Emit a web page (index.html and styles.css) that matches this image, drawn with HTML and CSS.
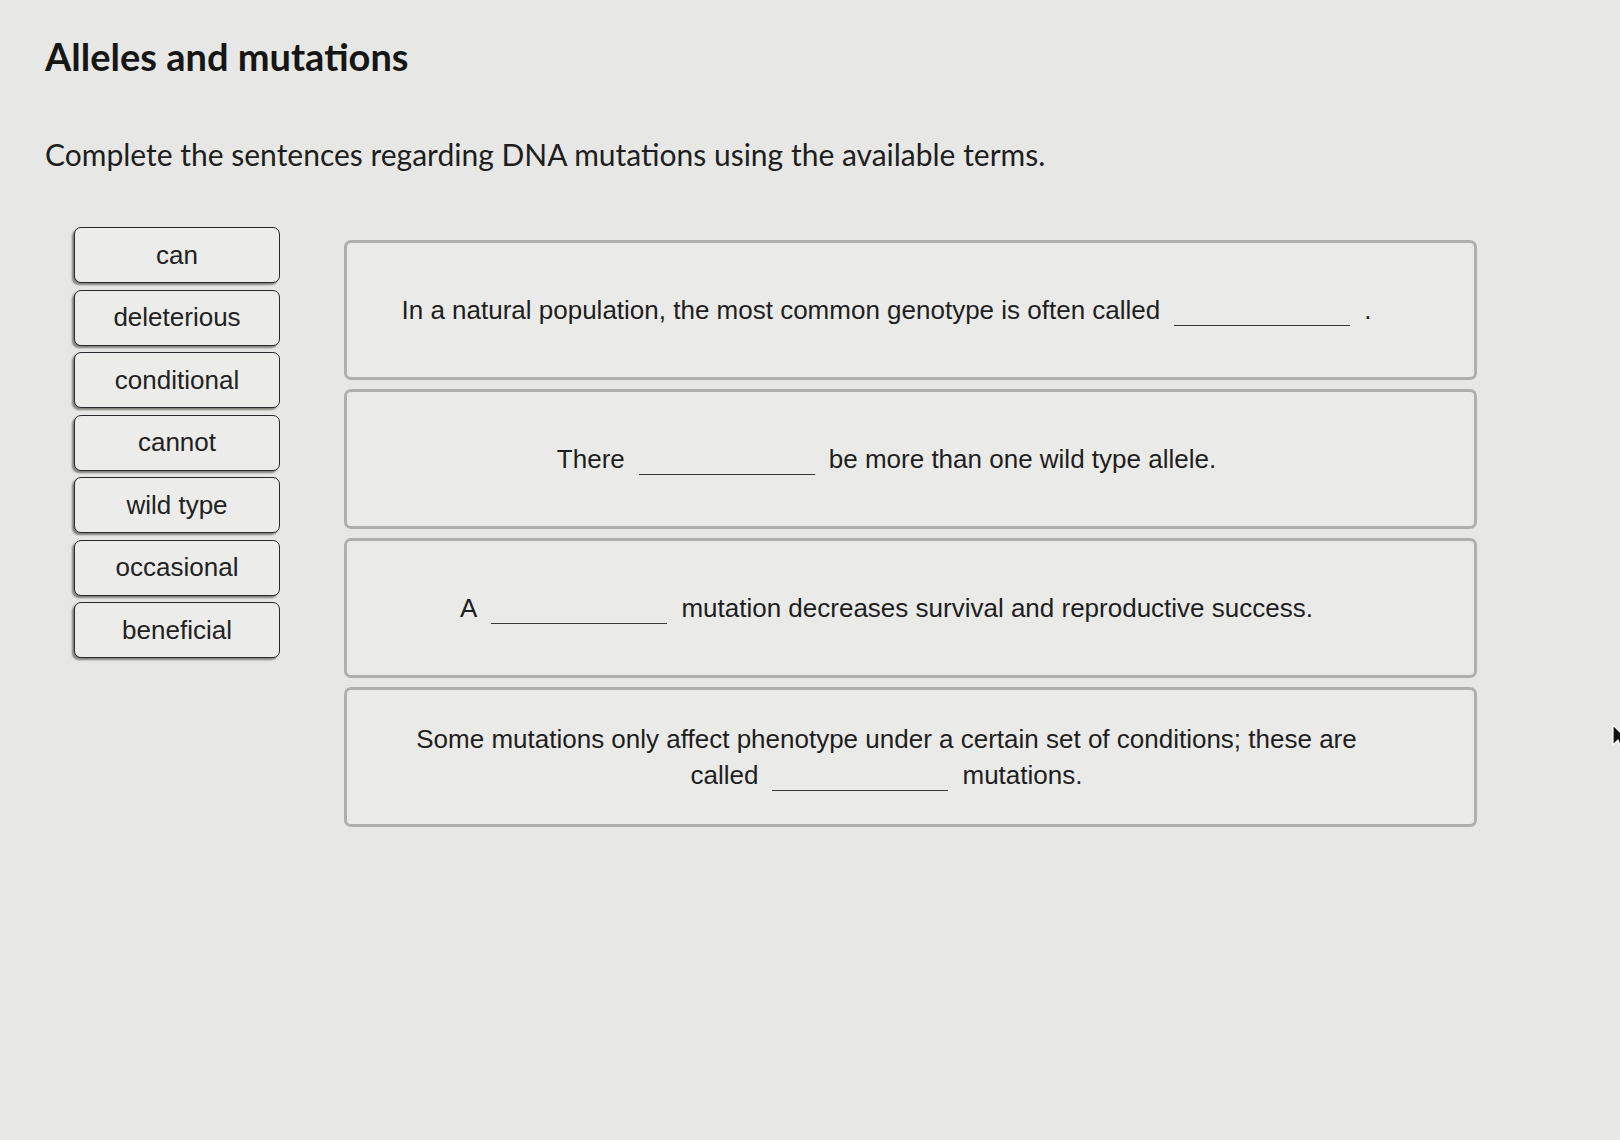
FILE: index.html
```html
<!DOCTYPE html>
<html lang="en">
<head>
<meta charset="utf-8">
<title>Alleles and mutations</title>
<link rel="stylesheet" href="styles.css">
</head>
<body>
<main class="page">
  <h1 class="title">Alleles and mutations</h1>
  <p class="prompt">Complete the sentences regarding DNA mutations using the available terms.</p>

  <section class="activity">
    <ul class="terms">
      <li class="term">can</li>
      <li class="term">deleterious</li>
      <li class="term">conditional</li>
      <li class="term">cannot</li>
      <li class="term">wild type</li>
      <li class="term">occasional</li>
      <li class="term">beneficial</li>
    </ul>

    <div class="sentences">
      <div class="sentence">
        <p class="line">In a natural population, the most common genotype is often called<span class="blank"></span>.</p>
      </div>
      <div class="sentence">
        <p class="line">There<span class="blank"></span>be more than one wild type allele.</p>
      </div>
      <div class="sentence">
        <p class="line">A<span class="blank"></span>mutation decreases survival and reproductive success.</p>
      </div>
      <div class="sentence">
        <p class="line">Some mutations only affect phenotype under a certain set of conditions; these are<br>called<span class="blank"></span>mutations.</p>
      </div>
    </div>
  </section>
</main>

<svg class="pointer" width="14" height="26" viewBox="0 0 14 26" aria-hidden="true">
  <path d="M1 1 L1 21 L6 16 L9 24 L12 23 L9 15 L15 15 Z" fill="#111" stroke="#fff" stroke-width="1.2"/>
</svg>
</body>
</html>
```

FILE: styles.css
```css
html, body {
  margin: 0;
  padding: 0;
}

body {
  background: #e7e7e5;
  color: #1e1e1e;
  font-family: "Liberation Sans", Arial, sans-serif;
  min-height: 1140px;
  overflow: hidden;
}

.page {
  padding: 33px 0 0 45px;
}

.title {
  margin: 0;
  font-family: Lato, "Open Sans", sans-serif;
  font-weight: 700;
  font-size: 38px;
  line-height: 46px;
  color: #161616;
}

.prompt {
  margin: 57px 0 0;
  font-family: Lato, "Open Sans", sans-serif;
  font-size: 30px;
  line-height: 36px;
  color: #1e1e1e;
}

.activity {
  display: flex;
  align-items: flex-start;
  margin-top: 55px;
}

/* word bank */
.terms {
  list-style: none;
  margin: 0 0 0 29px;
  padding: 0;
  width: 206px;
  display: flex;
  flex-direction: column;
  gap: 6.5px;
}

.term {
  height: 56px;
  box-sizing: border-box;
  border: 1.5px solid #2a2a2e;
  border-radius: 7px;
  background: #ececea;
  box-shadow: -2px 2px 2px rgba(0, 0, 0, 0.45);
  display: flex;
  align-items: center;
  justify-content: center;
  font-size: 26px;
  color: #222;
}

/* drop targets */
.sentences {
  margin: 13px 0 0 64px;
  width: 1133px;
  display: flex;
  flex-direction: column;
  gap: 9px;
}

.sentence {
  height: 140px;
  box-sizing: border-box;
  border: 3px solid #b0afad;
  border-radius: 7px;
  background: #eaeae8;
  display: flex;
  align-items: center;
  justify-content: center;
  padding: 0 88px 0 40px;
}

.line {
  margin: 0;
  font-size: 26px;
  line-height: 36px;
  text-align: center;
  color: #1e1e1e;
}

.blank {
  display: inline-block;
  width: 176px;
  height: 1px;
  background: #3a3a3a;
  margin: 0 14px;
  vertical-align: -7px;
}

/* mouse pointer at the screen edge */
.pointer {
  position: absolute;
  left: 1612px;
  top: 724px;
}
```
